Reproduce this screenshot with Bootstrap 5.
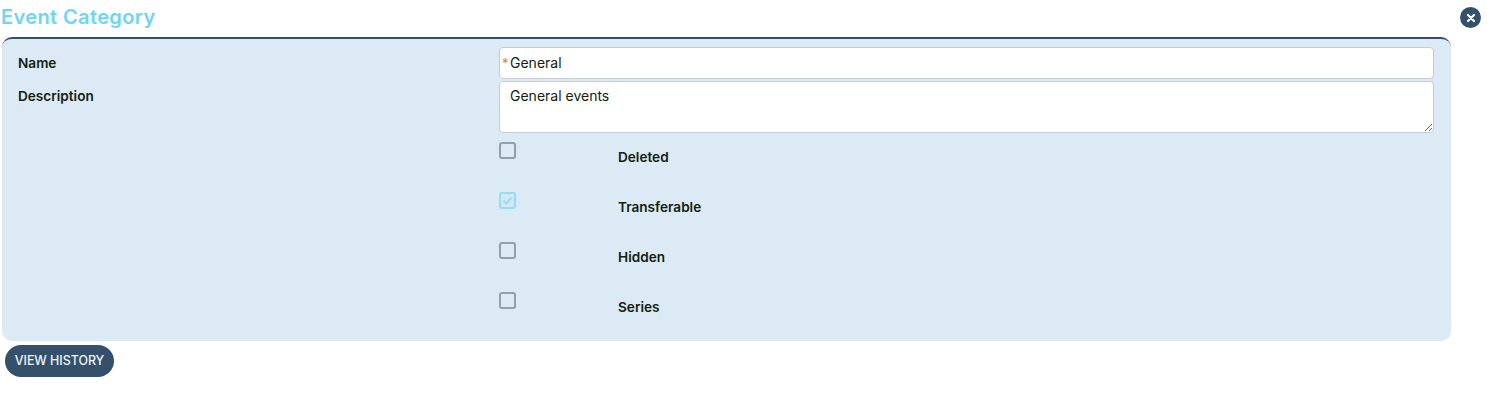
<!DOCTYPE html>
<html lang="en">
<head>
<meta charset="utf-8">
<title>Event Category</title>
<link href="https://cdn.jsdelivr.net/npm/bootstrap@5.3.0/dist/css/bootstrap.min.css" rel="stylesheet">
<style>
body{font-family:"Inter","Liberation Sans",sans-serif;color:#14210f;background:#fff;font-size:14px;overflow:hidden}
.page-wrap{width:1487px;height:400px;padding:0 0 0 2px}
.head-bar{height:37px;padding-right:5px}
.ev-title{font-size:20px;font-weight:600;color:#6dd5f5;margin:0 0 0 -1px;line-height:34px;letter-spacing:.38px}
.close-dot{width:21px;height:21px;border-radius:50%;background:#34506b;border:0;padding:0;margin-top:7px;margin-right:1px}
.close-dot svg{display:block;margin:auto}
.ev-panel{width:1449px;height:304px;background:#dbeaf5;border-top:2px solid #34506b;border-radius:10px;padding:8px 17px 0 16px}
.lbl-col{width:481px;flex:none;font-weight:600;font-size:13.6px;line-height:16px;padding-top:8px}
.desc-lbl{padding-top:7px}
.in-wrap{height:32px;margin-bottom:2px}
.ev-input,.ev-area{font-size:14px;color:#14210f;border:1px solid #c4ccd6;border-radius:4px;padding:0 10px;background:#fff;font-family:inherit;box-shadow:none}
.ev-input{height:32px;min-height:32px;padding-bottom:2px}
.ev-area{height:52px;min-height:52px;padding-top:5px;line-height:18px}
.req-star{position:absolute;left:3px;top:8px;color:#f0705a;font-size:13px;line-height:16px}
.chk-row{height:50px;margin-left:481px}
.chk-cell{width:119px;flex:none;padding-top:9px}
.chk-text{font-weight:600;font-size:13.6px;line-height:16px;padding-top:16px;margin:0}
.ev-check.form-check-input{display:block;width:17px;height:17px;margin:0;border:2px solid #929fac;border-radius:3px;background-color:#dbeaf5;opacity:1}
.ev-check.form-check-input:checked{border-color:#96dcf5;background-color:#d3e8f5;background-size:13px;background-position:center;background-image:url("data:image/svg+xml,%3Csvg xmlns='http://www.w3.org/2000/svg' viewBox='0 0 13 13'%3E%3Cpath d='M2.5 6.8l2.8 2.7L10.5 3.6' fill='none' stroke='%2396dcf5' stroke-width='2'/%3E%3C/svg%3E")}
.ev-btn{background:#34506b;color:#f2f5f8;font-size:12.4px;font-weight:500;border:0;border-radius:16px;height:32px;width:109px;padding:0;margin:4px 0 0 3px}
.ev-btn:hover{background:#34506b;color:#f2f5f8}
</style>
</head>
<body>
<div class="page-wrap">
  <div class="head-bar d-flex justify-content-between align-items-start">
    <h1 class="ev-title">Event Category</h1>
    <button class="close-dot" type="button" aria-label="Close">
      <svg width="10" height="10" viewBox="0 0 10 10"><path d="M2 2l6 6M8 2l-6 6" stroke="#fff" stroke-width="2.2" stroke-linecap="round"/></svg>
    </button>
  </div>
  <div class="ev-panel">
    <div class="d-flex in-wrap">
      <label class="lbl-col" for="nm">Name</label>
      <div class="flex-grow-1 position-relative">
        <input id="nm" class="form-control ev-input" type="text" value="General">
        <span class="req-star">*</span>
      </div>
    </div>
    <div class="d-flex">
      <label class="lbl-col desc-lbl" for="ds">Description</label>
      <div class="flex-grow-1">
        <textarea id="ds" class="form-control ev-area">General events</textarea>
      </div>
    </div>
    <div class="d-flex chk-row"><div class="chk-cell"><input class="form-check-input ev-check" type="checkbox" id="c1"></div><label class="chk-text" for="c1">Deleted</label></div>
    <div class="d-flex chk-row"><div class="chk-cell"><input class="form-check-input ev-check" type="checkbox" id="c2" checked></div><label class="chk-text" for="c2">Transferable</label></div>
    <div class="d-flex chk-row"><div class="chk-cell"><input class="form-check-input ev-check" type="checkbox" id="c3"></div><label class="chk-text" for="c3">Hidden</label></div>
    <div class="d-flex chk-row"><div class="chk-cell"><input class="form-check-input ev-check" type="checkbox" id="c4"></div><label class="chk-text" for="c4">Series</label></div>
  </div>
  <button class="btn ev-btn" type="button">VIEW HISTORY</button>
</div>
<script src="https://cdn.jsdelivr.net/npm/bootstrap@5.3.0/dist/js/bootstrap.bundle.min.js"></script>
</body>
</html>
